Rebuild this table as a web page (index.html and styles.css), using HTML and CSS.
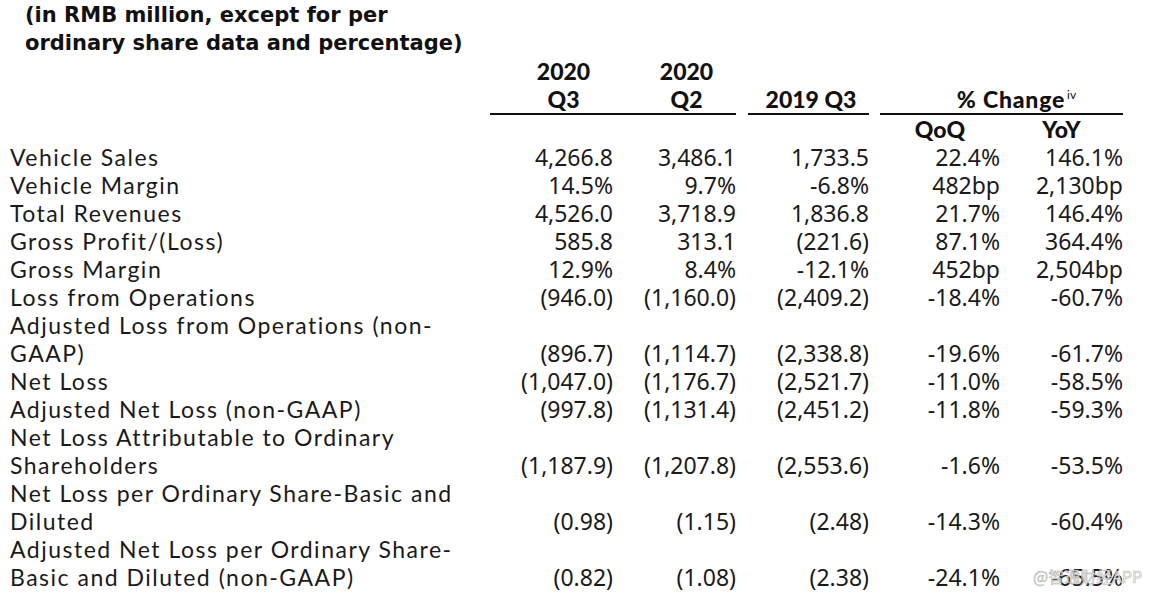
FILE: index.html
```html
<!DOCTYPE html>
<html>
<head>
<meta charset="utf-8">
<link rel="stylesheet" href="styles.css">
</head>
<body>
<div class="page">
  <div class="title">(in RMB million, except for per<br>ordinary share data and percentage)</div>
  <div class="table">
    <div class="hd c1 ul">2020<br>Q3</div>
    <div class="hd c2 ul">2020<br>Q2</div>
    <div class="hd c3 ul">2019 Q3</div>
    <div class="hd pc ul">% Change<sup>iv</sup></div>
    <div class="hd qoq sub">QoQ</div>
    <div class="hd yoy sub">YoY</div>

    <div class="lb">Vehicle Sales</div><div class="n c1">4,266.8</div><div class="n c2">3,486.1</div><div class="n c3">1,733.5</div><div class="n qoq">22.4%</div><div class="n yoy">146.1%</div>
    <div class="lb">Vehicle Margin</div><div class="n c1">14.5%</div><div class="n c2">9.7%</div><div class="n c3">-6.8%</div><div class="n qoq">482bp</div><div class="n yoy">2,130bp</div>
    <div class="lb">Total Revenues</div><div class="n c1">4,526.0</div><div class="n c2">3,718.9</div><div class="n c3">1,836.8</div><div class="n qoq">21.7%</div><div class="n yoy">146.4%</div>
    <div class="lb">Gross Profit/(Loss)</div><div class="n c1">585.8</div><div class="n c2">313.1</div><div class="n c3">(221.6)</div><div class="n qoq">87.1%</div><div class="n yoy">364.4%</div>
    <div class="lb">Gross Margin</div><div class="n c1">12.9%</div><div class="n c2">8.4%</div><div class="n c3">-12.1%</div><div class="n qoq">452bp</div><div class="n yoy">2,504bp</div>
    <div class="lb">Loss from Operations</div><div class="n c1">(946.0)</div><div class="n c2">(1,160.0)</div><div class="n c3">(2,409.2)</div><div class="n qoq">-18.4%</div><div class="n yoy">-60.7%</div>
    <div class="lb">Adjusted Loss from Operations (non-<br>GAAP)</div><div class="n c1">(896.7)</div><div class="n c2">(1,114.7)</div><div class="n c3">(2,338.8)</div><div class="n qoq">-19.6%</div><div class="n yoy">-61.7%</div>
    <div class="lb">Net Loss</div><div class="n c1">(1,047.0)</div><div class="n c2">(1,176.7)</div><div class="n c3">(2,521.7)</div><div class="n qoq">-11.0%</div><div class="n yoy">-58.5%</div>
    <div class="lb">Adjusted Net Loss (non-GAAP)</div><div class="n c1">(997.8)</div><div class="n c2">(1,131.4)</div><div class="n c3">(2,451.2)</div><div class="n qoq">-11.8%</div><div class="n yoy">-59.3%</div>
    <div class="lb">Net Loss Attributable to Ordinary<br>Shareholders</div><div class="n c1">(1,187.9)</div><div class="n c2">(1,207.8)</div><div class="n c3">(2,553.6)</div><div class="n qoq">-1.6%</div><div class="n yoy">-53.5%</div>
    <div class="lb">Net Loss per Ordinary Share-Basic and<br>Diluted</div><div class="n c1">(0.98)</div><div class="n c2">(1.15)</div><div class="n c3">(2.48)</div><div class="n qoq">-14.3%</div><div class="n yoy">-60.4%</div>
    <div class="lb">Adjusted Net Loss per Ordinary Share-<br>Basic and Diluted (non-GAAP)</div><div class="n c1">(0.82)</div><div class="n c2">(1.08)</div><div class="n c3">(2.38)</div><div class="n qoq">-24.1%</div><div class="n yoy">-65.5%</div>
  </div>
  <div class="watermark">@智通财经APP</div>
</div>
</body>
</html>
```

FILE: styles.css
```css
html, body {
  margin: 0;
  padding: 0;
  background: #ffffff;
}
.page {
  position: relative;
  width: 1151px;
  height: 594px;
  overflow: hidden;
  color: #1a1a1a;
}
.title {
  padding: 1px 0 0 25px;
  font-family: "DejaVu Sans", sans-serif;
  font-weight: 700;
  font-size: 21px;
  line-height: 28px;
  color: #111;
}
.table {
  display: grid;
  grid-template-columns: 490px 123px 123px 12px 121px 11px 120px 123px;
  align-items: end;
}
.hd {
  font-family: "Lato", sans-serif;
  font-weight: 900;
  font-size: 23px;
  line-height: 28px;
  text-align: center;
  color: #111;
}
.ul {
  border-bottom: 2px solid #111;
}
.hd.c1, .hd.c2 { padding-left: 24px; }
.hd.c3 { padding-left: 5px; }
.hd.pc {
  grid-column: 7 / span 2;
  padding-left: 30px;
  letter-spacing: 0.8px;
}
.hd sup {
  font-size: 12px;
  font-weight: 400;
  line-height: 0;
  letter-spacing: 0;
  vertical-align: 9px;
  margin-left: 2px;
}
.c1 { grid-column: 2; }
.c2 { grid-column: 3; }
.c3 { grid-column: 5; }
.qoq { grid-column: 7; }
.yoy { grid-column: 8; }
.lb {
  grid-column: 1;
  padding-left: 10px;
  font-family: "Lato", sans-serif;
  font-size: 23px;
  letter-spacing: 1.5px;
  line-height: 28px;
  color: #1a1a1a;
}
.n {
  font-family: "Noto Sans", sans-serif;
  font-size: 23px;
  line-height: 28px;
  text-align: right;
  color: #1a1a1a;
}
.watermark {
  position: absolute;
  left: 1033px;
  top: 566px;
  font-family: "Noto Sans CJK SC", sans-serif;
  font-size: 16px;
  line-height: 20px;
  color: rgba(245, 245, 245, 0.9);
  -webkit-text-stroke: 0.5px rgba(150, 150, 150, 0.8);
}
```
